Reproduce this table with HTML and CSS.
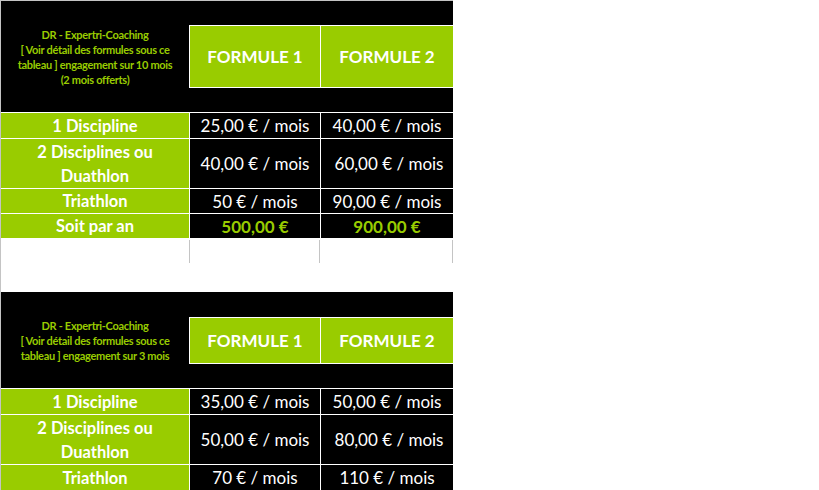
FILE: index.html
```html
<!DOCTYPE html>
<html lang="fr">
<head>
<meta charset="utf-8">
<title>Tarifs</title>
<link rel="stylesheet" href="styles.css">
</head>
<body>
<div class="sheet">
  <section class="block">
    <div class="head head-tall">
      <div class="intro">DR - Expertri-Coaching<br>[ Voir détail des formules sous ce<br>tableau ] engagement sur 10 mois<br>(2 mois offerts)</div>
      <div class="formules formules-tall">
        <div class="formule">FORMULE 1</div>
        <div class="formule formule-last">FORMULE 2</div>
      </div>
    </div>
    <div class="row row-first">
      <div class="label">1 Discipline</div>
      <div class="price">25,00 € / mois</div>
      <div class="price">40,00 € / mois</div>
    </div>
    <div class="row row-double">
      <div class="label">2 Disciplines ou<br>Duathlon</div>
      <div class="price">40,00 € / mois</div>
      <div class="price price-shift">60,00 € / mois</div>
    </div>
    <div class="row">
      <div class="label">Triathlon</div>
      <div class="price">50 € / mois</div>
      <div class="price">90,00 € / mois</div>
    </div>
    <div class="row">
      <div class="label">Soit par an</div>
      <div class="price total">500,00 €</div>
      <div class="price total">900,00 €</div>
    </div>
    <div class="blank">
      <div class="blank-cell"></div>
      <div class="blank-cell"></div>
      <div class="blank-cell"></div>
    </div>
  </section>

  <section class="block block-second">
    <div class="head head-short">
      <div class="intro">DR - Expertri-Coaching<br>[ Voir détail des formules sous ce<br>tableau ] engagement sur 3 mois</div>
      <div class="formules formules-short">
        <div class="formule">FORMULE 1</div>
        <div class="formule formule-last">FORMULE 2</div>
      </div>
    </div>
    <div class="row row-first">
      <div class="label">1 Discipline</div>
      <div class="price">35,00 € / mois</div>
      <div class="price">50,00 € / mois</div>
    </div>
    <div class="row row-double">
      <div class="label">2 Disciplines ou<br>Duathlon</div>
      <div class="price">50,00 € / mois</div>
      <div class="price price-shift">80,00 € / mois</div>
    </div>
    <div class="row row-last">
      <div class="label">Triathlon</div>
      <div class="price">70 € / mois</div>
      <div class="price">110 € / mois</div>
    </div>
  </section>
</div>
</body>
</html>
```

FILE: styles.css
```css
html, body {
  margin: 0;
  padding: 0;
  background: #ffffff;
}

body {
  font-family: "Lato", "Open Sans", sans-serif;
  overflow: hidden;
}

.sheet {
  width: 452px;
  border-top: 1px solid #c4c4c4;
  border-left: 1px solid #c4c4c4;
}

.block {
  display: flex;
  flex-direction: column;
}

.block-second {
  margin-top: 28px;
}

.head {
  background: #000000;
  display: flex;
  align-items: center;
}

.head-tall {
  height: 111px;
}

.head-short {
  height: 96px;
}

.intro {
  width: 188px;
  flex: none;
  color: #99cc00;
  font-size: 11px;
  font-weight: 700;
  line-height: 15px;
  text-align: center;
  letter-spacing: -0.3px;
}

.head-short .intro {
  padding-top: 1px;
}

.formules {
  display: flex;
  gap: 1px;
  background: #ffffff;
  border: 1px solid #ffffff;
  border-right: none;
  width: 263px;
  box-sizing: content-box;
}

.formules-tall {
  height: 61px;
}

.formules-short {
  height: 45px;
}

.formule {
  width: 130px;
  background: #99cc00;
  color: #ffffff;
  font-size: 17px;
  font-weight: 700;
  display: flex;
  align-items: center;
  justify-content: center;
}

.formule-last {
  width: 132px;
}

.row {
  display: grid;
  grid-template-columns: 188px 130px 132px;
  column-gap: 1px;
  height: 24px;
  margin-top: 1px;
  background: #ffffff;
}

.row-first {
  height: 25px;
}

.row-double {
  height: 49px;
}

.row-last {
  height: 25px;
}

.label {
  background: #99cc00;
  color: #ffffff;
  font-size: 16.5px;
  font-weight: 700;
  line-height: 24px;
  display: flex;
  align-items: center;
  justify-content: center;
  text-align: center;
}

.price {
  background: #000000;
  color: #ffffff;
  font-size: 17px;
  display: flex;
  align-items: center;
  justify-content: center;
  white-space: nowrap;
}

.price-shift {
  padding-left: 4px;
}

.total {
  color: #99cc00;
  font-weight: 700;
  font-size: 17px;
}

.blank {
  display: grid;
  grid-template-columns: 188px 130px 132px;
  column-gap: 1px;
  height: 25px;
  margin-top: 1px;
}

.blank-cell {
  border-right: 1px solid #c4c4c4;
  margin-top: 1px;
  height: 23px;
}

.blank-cell:first-child {
  margin-right: -1px;
}
```
